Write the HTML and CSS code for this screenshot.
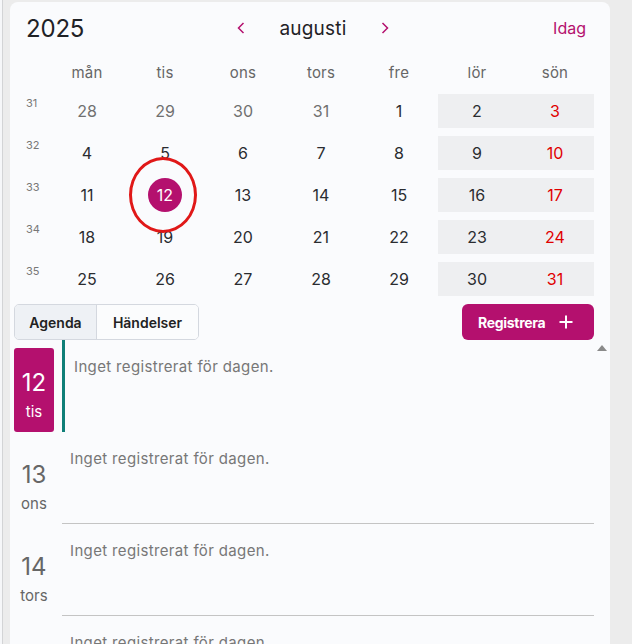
FILE: index.html
```html
<!DOCTYPE html>
<html lang="sv">
<head>
<meta charset="utf-8">
<title>Kalender</title>
<link rel="stylesheet" href="styles.css">
</head>
<body>
<div class="page">
  <div class="side"></div>
  <main class="card">
    <header class="cal-head">
      <div class="year">2025</div>
      <div class="nav">
        <button class="chev" aria-label="Föregående">
          <svg width="8" height="12" viewBox="0 0 8 12"><polyline points="6.5,1 1.5,6 6.5,11" fill="none" stroke="#b4106e" stroke-width="1.5"/></svg>
        </button>
        <div class="month">augusti</div>
        <button class="chev" aria-label="Nästa">
          <svg width="8" height="12" viewBox="0 0 8 12"><polyline points="1.5,1 6.5,6 1.5,11" fill="none" stroke="#b4106e" stroke-width="1.5"/></svg>
        </button>
      </div>
      <a class="today-link">Idag</a>
    </header>

    <div class="grid">
      <div class="wd-blank"></div>
      <div class="wd">mån</div><div class="wd">tis</div><div class="wd">ons</div><div class="wd">tors</div><div class="wd">fre</div><div class="wd">lör</div><div class="wd">sön</div>

      <div class="wk">31</div>
      <div class="d other">28</div><div class="d other">29</div><div class="d other">30</div><div class="d other">31</div><div class="d">1</div><div class="d we">2</div><div class="d we sun">3</div>

      <div class="wk">32</div>
      <div class="d">4</div><div class="d">5</div><div class="d">6</div><div class="d">7</div><div class="d">8</div><div class="d we">9</div><div class="d we sun">10</div>

      <div class="wk">33</div>
      <div class="d">11</div><div class="d"><span class="today">12</span></div><div class="d">13</div><div class="d">14</div><div class="d">15</div><div class="d we">16</div><div class="d we sun">17</div>

      <div class="wk">34</div>
      <div class="d">18</div><div class="d">19</div><div class="d">20</div><div class="d">21</div><div class="d">22</div><div class="d we">23</div><div class="d we sun">24</div>

      <div class="wk">35</div>
      <div class="d">25</div><div class="d">26</div><div class="d">27</div><div class="d">28</div><div class="d">29</div><div class="d we">30</div><div class="d we sun">31</div>
    </div>

    <div class="toolbar">
      <div class="tabs">
        <button class="tab active">Agenda</button>
        <button class="tab">Händelser</button>
      </div>
      <button class="register">Registrera
        <svg width="14" height="14" viewBox="0 0 14 14"><path d="M7 0.5V13.5M0.5 7H13.5" stroke="#fff" stroke-width="2"/></svg>
      </button>
    </div>

    <section class="agenda">
      <span class="scroll-up"></span>
      <div class="day selected">
        <div class="date"><span class="num">12</span><span class="dn">tis</span></div>
        <div class="content">Inget registrerat för dagen.</div>
      </div>
      <div class="day">
        <div class="date"><span class="num">13</span><span class="dn">ons</span></div>
        <div class="content">Inget registrerat för dagen.</div>
      </div>
      <div class="day">
        <div class="date"><span class="num">14</span><span class="dn">tors</span></div>
        <div class="content">Inget registrerat för dagen.</div>
      </div>
      <div class="day">
        <div class="date"><span class="num">15</span><span class="dn">fre</span></div>
        <div class="content">Inget registrerat för dagen.</div>
      </div>
    </section>

    <div class="annotation"></div>
  </main>
</div>
</body>
</html>
```

FILE: styles.css
```css
* { box-sizing: border-box; }

html, body {
  margin: 0;
  height: 644px;
  overflow: hidden;
  background: #ececec;
  font-family: Inter, "Noto Sans", sans-serif;
  color: #222;
}

.page {
  display: flex;
  height: 644px;
}

.side {
  width: 10px;
  flex: none;
  background: #ececec;
  border-left: 2px solid #f6f7f9;
  box-shadow: inset 1px 0 0 #d3d4d6;
}

.card {
  position: relative;
  width: 600px;
  flex: none;
  margin-top: 2px;
  background: #fafbfd;
  border-radius: 8px 8px 0 0;
  overflow: hidden;
}

/* header */
.cal-head {
  display: flex;
  align-items: center;
  height: 52px;
  padding: 0 24px 0 16px;
}

.year {
  width: 210px;
  font-size: 24px;
  color: #1f2226;
  letter-spacing: -0.2px;
}

.nav {
  display: flex;
  align-items: center;
}

.chev {
  border: 0;
  background: none;
  padding: 0;
  width: 10px;
  height: 14px;
  display: flex;
  align-items: center;
  justify-content: center;
}

.month {
  width: 134px;
  text-align: center;
  font-size: 19px;
  color: #1f2226;
  letter-spacing: 0.2px;
}

.today-link {
  margin-left: auto;
  font-size: 16px;
  color: #b4106e;
}

/* calendar grid */
.grid {
  display: grid;
  grid-template-columns: 22px repeat(7, 78px);
  grid-template-rows: 32px repeat(5, 34px);
  row-gap: 8px;
  padding: 0 16px;
}

.wd {
  align-self: start;
  margin-top: 8px;
  line-height: 22px;
  text-align: center;
  font-size: 15px;
  color: #666;
  letter-spacing: 0.2px;
}

.wk {
  font-size: 11px;
  color: #777;
  padding-top: 3px;
  line-height: 12px;
}

.d {
  display: flex;
  align-items: center;
  justify-content: center;
  font-size: 16px;
  color: #2a2c30;
}

.d.other { color: #707070; }
.d.we { background: #eeeff1; }
.d.sun { color: #e00000; }

.today {
  width: 34px;
  height: 34px;
  border-radius: 50%;
  background: #b4106e;
  color: #fff;
  display: flex;
  align-items: center;
  justify-content: center;
}

/* toolbar */
.toolbar {
  display: flex;
  justify-content: space-between;
  align-items: center;
  padding: 8px 16px 0 4px;
}

.tabs {
  display: flex;
  height: 36px;
  border: 1px solid #d4d8df;
  border-radius: 5px;
  overflow: hidden;
}

.tab {
  border: 0;
  background: #fbfcfd;
  font-family: inherit;
  font-size: 14px;
  font-weight: 600;
  color: #222;
  padding: 0;
}

.tab.active {
  width: 82px;
  background: #eef1f5;
  border-right: 1px solid #d4d8df;
}

.tab:not(.active) { width: 101px; }

.register {
  display: flex;
  align-items: center;
  gap: 14px;
  width: 132px;
  height: 36px;
  border: 0;
  border-radius: 6px;
  background: #b4106e;
  color: #fff;
  font-family: inherit;
  font-size: 14px;
  font-weight: 700;
  padding: 0 0 0 16px;
  letter-spacing: -0.3px;
}

/* agenda */
.agenda {
  position: relative;
  padding: 0 16px 0 4px;
}

.scroll-up {
  position: absolute;
  right: 3px;
  top: 5px;
  width: 0;
  height: 0;
  border-left: 5px solid transparent;
  border-right: 5px solid transparent;
  border-bottom: 6px solid #8a8a8a;
}

.day {
  display: flex;
  gap: 8px;
  height: 92px;
}

.date {
  width: 40px;
  flex: none;
  margin-top: 8px;
  height: 84px;
  padding-top: 20px;
  display: flex;
  flex-direction: column;
  align-items: center;
  color: #666;
  border-radius: 3px;
}

.num {
  font-size: 24px;
  line-height: 30px;
}

.dn {
  font-size: 15px;
  line-height: 20px;
  margin-top: 4px;
}

.content {
  flex: 1;
  padding: 16px 0 0 8px;
  font-size: 15px;
  line-height: 22px;
  color: #777;
  letter-spacing: 0.35px;
  border-bottom: 1px solid #c4c4c4;
}

.day.selected .date {
  background: #b4106e;
  color: #fff;
}

.day.selected .content {
  border-bottom: 0;
  border-left: 3px solid #0f7f78;
  padding-left: 9px;
}

.annotation {
  position: absolute;
  left: 119px;
  top: 155px;
  width: 68px;
  height: 76px;
  border: 3px solid #e01818;
  border-radius: 50%;
  pointer-events: none;
}
```
